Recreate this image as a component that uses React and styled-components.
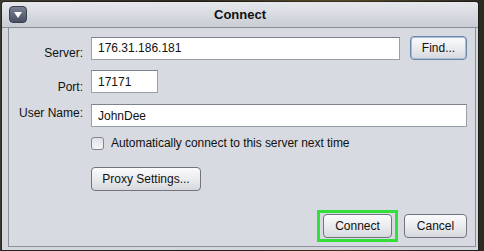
import React from "react";
import styled, { createGlobalStyle } from "styled-components";

const Global = createGlobalStyle`
  html, body {
    margin: 0;
    padding: 0;
    width: 484px;
    height: 251px;
    overflow: hidden;
    background: linear-gradient(90deg, #3d3a30 0%, #2e2b22 40%, #5a4a2c 70%, #2b2a24 100%);
    font-family: "Liberation Sans", Arial, sans-serif;
  }
`;

const Desktop = styled.div`
  width: 484px;
  height: 251px;
  padding: 2px 6px 1px 2px;
  box-sizing: border-box;
  display: flex;
`;

const Window = styled.div`
  flex: 1;
  display: flex;
  flex-direction: column;
  background: #d4d7dd;
  border-radius: 3px 3px 0 0;
  box-shadow: 0 0 0 1px rgba(0, 0, 0, 0.35);
`;

const TitleBar = styled.div`
  height: 25px;
  display: grid;
  grid-template-columns: 32px 1fr 32px;
  align-items: center;
  background: linear-gradient(#e6e8ec, #c9cdd4);
  border-bottom: 1px solid #8a8f98;
  border-radius: 3px 3px 0 0;
`;

const MenuButton = styled.div`
  margin-left: 7px;
  width: 18px;
  height: 17px;
  border-radius: 4px;
  background: linear-gradient(#7b8294, #4a5062);
  border: 1px solid #3a3f4c;
  box-sizing: border-box;
  display: flex;
  align-items: center;
  justify-content: center;
`;

const Title = styled.div`
  text-align: center;
  font-weight: bold;
  font-size: 13px;
  color: #111;
`;

const Panel = styled.div`
  flex: 1;
  margin: 0 2px 3px 6px;
  border: 1px solid #8c9098;
  border-top: none;
  background: #d7dae0;
  padding: 8px 8px 4px 0;
  display: flex;
  flex-direction: column;
`;

const Form = styled.div`
  display: grid;
  grid-template-columns: 74px 1fr;
  column-gap: 8px;
  row-gap: 0;
  align-items: center;
`;

const Label = styled.div`
  text-align: right;
  font-size: 12px;
  color: #111;
  white-space: nowrap;
  align-self: ${(p) => (p.$top ? "start" : "center")};
  padding-top: ${(p) => (p.$top ? "2px" : "0")};
`;

const FieldRow = styled.div`
  display: flex;
  align-items: center;
  gap: 10px;
  margin-bottom: ${(p) => p.$mb || 0}px;
  margin-top: ${(p) => p.$mt || 0}px;
`;

const Field = styled.div`
  height: 23px;
  box-sizing: border-box;
  width: ${(p) => (p.$w ? `${p.$w}px` : "auto")};
  flex: ${(p) => (p.$w ? "none" : 1)};
  background: #fff;
  border: 1px solid #9a9ea6;
  border-top-color: #7e828a;
  font-size: 12px;
  color: #111;
  padding: 0 6px;
  display: flex;
  align-items: center;
`;

const Button = styled.div`
  height: 24px;
  box-sizing: border-box;
  width: ${(p) => (p.$w ? `${p.$w}px` : "auto")};
  border: 1px solid ${(p) => (p.$blue ? "#6f86ab" : "#70757e")};
  border-radius: 4px;
  background: linear-gradient(#fbfbfc, #e9eaed 55%, #d5d8dd);
  box-shadow: ${(p) => (p.$blue ? "inset 0 0 0 1px #a9bcd9" : "none")};
  font-size: 12px;
  color: #111;
  display: flex;
  align-items: center;
  justify-content: center;
`;

const CheckRow = styled.div`
  display: flex;
  align-items: center;
  gap: 7px;
  font-size: 12px;
  color: #111;
  margin-top: 9px;
  letter-spacing: -0.05px;
`;

const Check = styled.div`
  width: 13px;
  height: 13px;
  box-sizing: border-box;
  border: 1px solid #80858e;
  border-radius: 3px;
  background: linear-gradient(#dfe2e6, #f4f5f7);
`;

const Footer = styled.div`
  margin-top: auto;
  display: flex;
  justify-content: flex-end;
  align-items: center;
  gap: 6px;
`;

const Focus = styled.div`
  border: 3px solid #33e03a;
  padding: 1px 3px;
`;

export default function App() {
  return (
    <>
      <Global />
      <Desktop>
        <Window>
          <TitleBar>
            <MenuButton>
              <svg width="8" height="6" viewBox="0 0 8 6">
                <path d="M0 0 L8 0 L4 6 Z" fill="#fff" />
              </svg>
            </MenuButton>
            <Title>Connect</Title>
            <div />
          </TitleBar>
          <Panel>
            <Form>
              <Label>Server:</Label>
              <FieldRow $mb={10}>
                <Field>176.31.186.181</Field>
                <Button $blue $w={57}>Find...</Button>
              </FieldRow>
              <Label>Port:</Label>
              <FieldRow $mb={11}>
                <Field $w={67}>17171</Field>
              </FieldRow>
              <Label $top>User Name:</Label>
              <FieldRow>
                <Field>JohnDee</Field>
              </FieldRow>
              <div />
              <CheckRow>
                <Check />
                Automatically connect to this server next time
              </CheckRow>
              <div />
              <FieldRow $mt={17}>
                <Button $w={110}>Proxy Settings...</Button>
              </FieldRow>
            </Form>
            <Footer>
              <Focus>
                <Button $w={69}>Connect</Button>
              </Focus>
              <Button $w={63}>Cancel</Button>
            </Footer>
          </Panel>
        </Window>
      </Desktop>
    </>
  );
}
